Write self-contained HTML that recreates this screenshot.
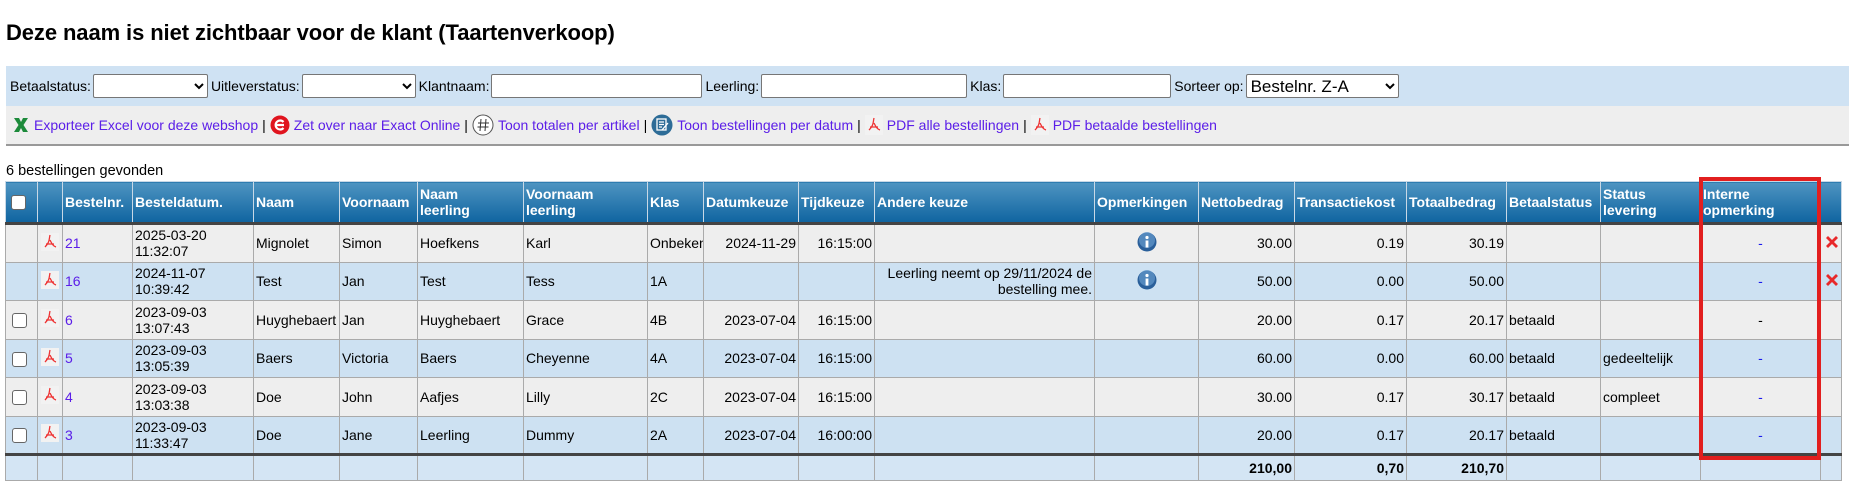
<!DOCTYPE html>
<html><head><meta charset="utf-8">
<style>
*{box-sizing:border-box}
body{margin:0;width:1855px;height:495px;overflow:hidden;background:#fff;font-family:"Liberation Sans",Arial,sans-serif;font-size:14px;color:#000;position:relative}
h1{position:absolute;left:6px;top:20px;margin:0;font-size:22px;font-weight:bold;letter-spacing:-0.1px}
.filter{position:absolute;left:6px;top:66px;width:1843px;height:40px;background:#cfe2f3;display:flex;align-items:center;padding-left:4px;font-size:14px}
.filter select,.filter input{height:24px;border:1px solid #767676;border-radius:2px;background:#fff;margin:0 3px 0 2px;font-family:inherit}
.links{position:absolute;left:6px;top:106px;width:1843px;height:40px;background:#eee;border-bottom:2px solid #999;display:flex;align-items:center;padding-left:6px;font-size:14px}
.links a{color:#5b1ee8;text-decoration:none}
.links .sep{color:#000;margin:0 4px}
.ic{display:inline-block;vertical-align:-3px;margin-right:4px}
.found{position:absolute;left:6px;top:163px;font-size:14.5px}
table{position:absolute;left:5px;top:181px;border-collapse:collapse;table-layout:fixed;width:1836px}
td,th{border:1px solid #aaa;padding:0 2px;overflow:hidden;white-space:nowrap;line-height:16px;font-size:14px}
th{background:linear-gradient(#4e94c1,#0f64a0);color:#fff;text-align:left;font-weight:bold;height:42px;border-color:#c8d8e6;border-bottom:3px solid #444;vertical-align:middle}
tr.r td{height:38.5px}
tr.o td{background:#eee}
tr.e td{background:#cde1f2}
tr.t td{background:#d4e5f4;height:26px;font-weight:bold;text-align:right;border-top:3px solid #444}
.num{text-align:right}
.c{text-align:center}
a.n{color:#5b1ee8;text-decoration:none}
.cb{width:15px;height:15px;border:1px solid #666;border-radius:3px;background:#fff;display:inline-block;vertical-align:middle;margin-left:4px}
.red{position:absolute;left:1699px;top:177px;width:122px;height:283px;border:4px solid #e21f1f}
.dash{color:#1a1aee}
</style></head><body>
<h1>Deze naam is niet zichtbaar voor de klant (Taartenverkoop)</h1>
<div class="filter">Betaalstatus:<select style="width:115px"></select>Uitleverstatus:<select style="width:114px"></select>Klantnaam:<input style="width:211px">Leerling:<input style="width:206px">Klas:<input style="width:168px">Sorteer op:<select style="width:153px;font-size:17px"><option>Bestelnr. Z-A</option></select></div>
<div class="links">
<svg class="ic" width="18" height="16" viewBox="0 0 18 16"><path d="M2 1h5l2 4 2-4h5l-4.5 7L16 15h-5l-2-4-2 4H2l4.5-7z" fill="#1c8a3a"/></svg><a>Exporteer Excel voor deze webshop</a><span class="sep">|</span>
<svg class="ic" width="20" height="20" viewBox="0 0 20 20"><circle cx="10" cy="10" r="9.5" fill="#e0141e"/><path d="M6 10h8M13.5 7a4.5 4.5 0 1 0 0 6" stroke="#fff" stroke-width="2.2" fill="none"/></svg><a>Zet over naar Exact Online</a><span class="sep">|</span>
<svg class="ic" width="22" height="22" viewBox="0 0 22 22"><circle cx="11" cy="11" r="10" fill="#fff" stroke="#555"/><path d="M9 5l-1 12M14 5l-1 12M6 9h11M5.5 13h11" stroke="#333" stroke-width="1"/></svg><a>Toon totalen per artikel</a><span class="sep">|</span>
<svg class="ic" width="22" height="22" viewBox="0 0 22 22"><circle cx="11" cy="11" r="10.5" fill="#2d6c97"/><rect x="6" y="5" width="9" height="11" fill="none" stroke="#fff" stroke-width="1.3"/><path d="M8 8h5M8 10.5h5M8 13h3M11 16l6-7" stroke="#fff" stroke-width="1.3"/></svg><a>Toon bestellingen per datum</a><span class="sep">|</span>
<svg class="ic" width="18" height="20" viewBox="0 0 18 20"><rect width="18" height="20" fill="#f2f2f2"/><path d="M9 3c-1 4 0 7 -5 12M9 8c2 4 3 6 6 7M5 12h8" stroke="#e33" stroke-width="1.3" fill="none"/></svg><a>PDF alle bestellingen</a><span class="sep">|</span>
<svg class="ic" width="18" height="20" viewBox="0 0 18 20"><rect width="18" height="20" fill="#f2f2f2"/><path d="M9 3c-1 4 0 7 -5 12M9 8c2 4 3 6 6 7M5 12h8" stroke="#e33" stroke-width="1.3" fill="none"/></svg><a>PDF betaalde bestellingen</a>
</div>
<div class="found">6 bestellingen gevonden</div>
<table>
<colgroup><col style="width:32px"><col style="width:25px"><col style="width:70px"><col style="width:121px"><col style="width:86px"><col style="width:78px"><col style="width:106px"><col style="width:124px"><col style="width:56px"><col style="width:95px"><col style="width:76px"><col style="width:220px"><col style="width:104px"><col style="width:96px"><col style="width:112px"><col style="width:100px"><col style="width:94px"><col style="width:100px"><col style="width:120px"><col style="width:21px"></colgroup>
<tr><th><span class="cb" style="margin-left:3px"></span></th><th></th><th>Bestelnr.</th><th>Besteldatum.</th><th>Naam</th><th>Voornaam</th><th>Naam<br>leerling</th><th>Voornaam<br>leerling</th><th>Klas</th><th>Datumkeuze</th><th>Tijdkeuze</th><th>Andere keuze</th><th>Opmerkingen</th><th>Nettobedrag</th><th>Transactiekost</th><th>Totaalbedrag</th><th>Betaalstatus</th><th>Status<br>levering</th><th>Interne<br>opmerking</th><th></th></tr>
<tr class="r o"><td></td><td class="c"><svg width="18" height="18" viewBox="0 0 18 18"><rect width="18" height="18" fill="#f2f2f2"/><path d="M9 2c-1 4 0 7-5 12M9 7c2 4 3 6 6 7M5 11h8" stroke="#e33" stroke-width="1.3" fill="none"/></svg></td><td><a class="n">21</a></td><td>2025-03-20<br>11:32:07</td><td>Mignolet</td><td>Simon</td><td>Hoefkens</td><td>Karl</td><td>Onbekend</td><td class="num">2024-11-29</td><td class="num">16:15:00</td><td></td><td class="c"><svg width="20" height="20" viewBox="0 0 20 20"><circle cx="10" cy="10" r="9.5" fill="#2a5f9a"/><circle cx="10" cy="8" r="8" fill="#6fa3d6" opacity=".6"/><circle cx="10" cy="5.5" r="1.6" fill="#fff"/><rect x="8.6" y="8.5" width="2.8" height="7" fill="#fff"/></svg></td><td class="num">30.00</td><td class="num">0.19</td><td class="num">30.19</td><td></td><td></td><td class="c"><span class="dash">-</span></td><td class="c"><svg width="18" height="18" viewBox="0 0 18 18"><path d="M3 5l2-2 4 4 4-4 2 2-4 4 4 4-2 2-4-4-4 4-2-2 4-4z" fill="#e8282a"/></svg></td></tr>
<tr class="r e"><td></td><td class="c"><svg width="18" height="18" viewBox="0 0 18 18"><rect width="18" height="18" fill="#f2f2f2"/><path d="M9 2c-1 4 0 7-5 12M9 7c2 4 3 6 6 7M5 11h8" stroke="#e33" stroke-width="1.3" fill="none"/></svg></td><td><a class="n">16</a></td><td>2024-11-07<br>10:39:42</td><td>Test</td><td>Jan</td><td>Test</td><td>Tess</td><td>1A</td><td></td><td></td><td class="num">Leerling neemt op 29/11/2024 de<br>bestelling mee.</td><td class="c"><svg width="20" height="20" viewBox="0 0 20 20"><circle cx="10" cy="10" r="9.5" fill="#2a5f9a"/><circle cx="10" cy="8" r="8" fill="#6fa3d6" opacity=".6"/><circle cx="10" cy="5.5" r="1.6" fill="#fff"/><rect x="8.6" y="8.5" width="2.8" height="7" fill="#fff"/></svg></td><td class="num">50.00</td><td class="num">0.00</td><td class="num">50.00</td><td></td><td></td><td class="c"><span class="dash">-</span></td><td class="c"><svg width="18" height="18" viewBox="0 0 18 18"><path d="M3 5l2-2 4 4 4-4 2 2-4 4 4 4-2 2-4-4-4 4-2-2 4-4z" fill="#e8282a"/></svg></td></tr>
<tr class="r o"><td><span class="cb"></span></td><td class="c"><svg width="18" height="18" viewBox="0 0 18 18"><rect width="18" height="18" fill="#f2f2f2"/><path d="M9 2c-1 4 0 7-5 12M9 7c2 4 3 6 6 7M5 11h8" stroke="#e33" stroke-width="1.3" fill="none"/></svg></td><td><a class="n">6</a></td><td>2023-09-03<br>13:07:43</td><td>Huyghebaert</td><td>Jan</td><td>Huyghebaert</td><td>Grace</td><td>4B</td><td class="num">2023-07-04</td><td class="num">16:15:00</td><td></td><td></td><td class="num">20.00</td><td class="num">0.17</td><td class="num">20.17</td><td>betaald</td><td></td><td class="c">-</td><td></td></tr>
<tr class="r e"><td><span class="cb"></span></td><td class="c"><svg width="18" height="18" viewBox="0 0 18 18"><rect width="18" height="18" fill="#f2f2f2"/><path d="M9 2c-1 4 0 7-5 12M9 7c2 4 3 6 6 7M5 11h8" stroke="#e33" stroke-width="1.3" fill="none"/></svg></td><td><a class="n">5</a></td><td>2023-09-03<br>13:05:39</td><td>Baers</td><td>Victoria</td><td>Baers</td><td>Cheyenne</td><td>4A</td><td class="num">2023-07-04</td><td class="num">16:15:00</td><td></td><td></td><td class="num">60.00</td><td class="num">0.00</td><td class="num">60.00</td><td>betaald</td><td>gedeeltelijk</td><td class="c"><span class="dash">-</span></td><td></td></tr>
<tr class="r o"><td><span class="cb"></span></td><td class="c"><svg width="18" height="18" viewBox="0 0 18 18"><rect width="18" height="18" fill="#f2f2f2"/><path d="M9 2c-1 4 0 7-5 12M9 7c2 4 3 6 6 7M5 11h8" stroke="#e33" stroke-width="1.3" fill="none"/></svg></td><td><a class="n">4</a></td><td>2023-09-03<br>13:03:38</td><td>Doe</td><td>John</td><td>Aafjes</td><td>Lilly</td><td>2C</td><td class="num">2023-07-04</td><td class="num">16:15:00</td><td></td><td></td><td class="num">30.00</td><td class="num">0.17</td><td class="num">30.17</td><td>betaald</td><td>compleet</td><td class="c"><span class="dash">-</span></td><td></td></tr>
<tr class="r e"><td><span class="cb"></span></td><td class="c"><svg width="18" height="18" viewBox="0 0 18 18"><rect width="18" height="18" fill="#f2f2f2"/><path d="M9 2c-1 4 0 7-5 12M9 7c2 4 3 6 6 7M5 11h8" stroke="#e33" stroke-width="1.3" fill="none"/></svg></td><td><a class="n">3</a></td><td>2023-09-03<br>11:33:47</td><td>Doe</td><td>Jane</td><td>Leerling</td><td>Dummy</td><td>2A</td><td class="num">2023-07-04</td><td class="num">16:00:00</td><td></td><td></td><td class="num">20.00</td><td class="num">0.17</td><td class="num">20.17</td><td>betaald</td><td></td><td class="c"><span class="dash">-</span></td><td></td></tr>
<tr class="t"><td></td><td></td><td></td><td></td><td></td><td></td><td></td><td></td><td></td><td></td><td></td><td></td><td></td><td>210,00</td><td>0,70</td><td>210,70</td><td></td><td></td><td></td><td></td></tr>
</table>
<div class="red"></div>
</body></html>
